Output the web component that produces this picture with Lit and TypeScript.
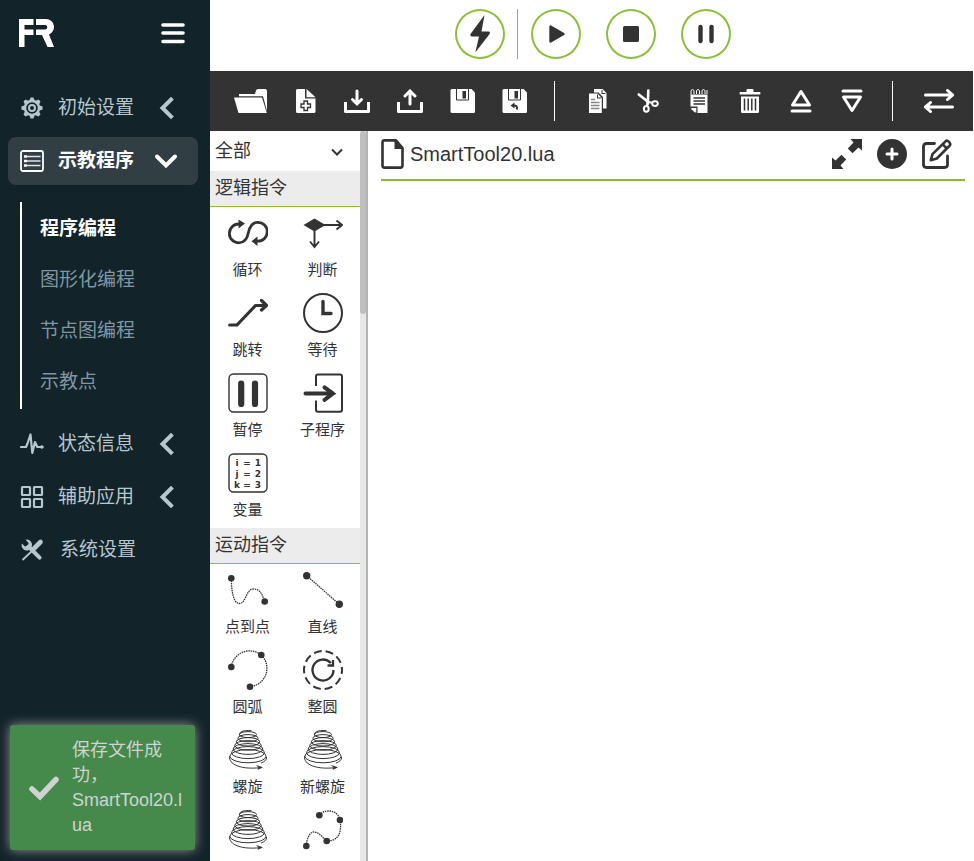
import { LitElement, html, svg, css, nothing, SVGTemplateResult } from "lit";
import { customElement, state } from "lit/decorators.js";
import { classMap } from "lit/directives/class-map.js";

type Glyph = { w: number; h: number; art: SVGTemplateResult };

const glyph = (w: number, h: number, art: SVGTemplateResult): Glyph => ({ w, h, art });

const draw = (g: Glyph) => html`<svg
  width=${g.w}
  height=${g.h}
  viewBox="0 0 ${g.w} ${g.h}"
  fill="none"
  aria-hidden="true"
>${g.art}</svg>`;

/* ---------- shared shapes ---------- */

const INK = "#333333";

const chevronLeft = glyph(24, 24, svg`<path d="M17 3.5L8.5 12l8.500 8.500" stroke="currentColor" stroke-width="4" stroke-linecap="square"/>`);
const chevronDown = glyph(24, 24, svg`<path d="M3 7.5l9 9 9-9" stroke="currentColor" stroke-width="4" stroke-linecap="round"/>`);
const chevronSmall = glyph(12, 8, svg`<path d="M1 1.5l5 5 5-5" stroke="${INK}" stroke-width="2"/>`);

const logo = glyph(35, 28, svg`
  <path fill="#fff" d="M0 0H14.5V6H5.5V10.5H14.5V16H5.5V28H0Z"/>
  <path fill="#fff" d="M17 0H27a8 8 0 0 1 3 15.4L35 28H28.5L23 16H17V10.5H26.5a2.3 2.3 0 0 0 0-4.5H17Z"/>`);

const burger = glyph(24, 22, svg`
  <path d="M2 3H22M2 11H22M2 19.5H22" stroke="#fff" stroke-width="3.6" stroke-linecap="round"/>`);

/* ---------- sidebar ---------- */

const gear = glyph(24, 24, svg`
  <circle cx="12" cy="12" r="7" stroke="currentColor" stroke-width="2.4"/>
  <circle cx="12" cy="12" r="3" stroke="currentColor" stroke-width="2"/>
  ${[0, 45, 90, 135, 180, 225, 270, 315].map(
    (a) => svg`<path transform="rotate(${a} 12 12)" fill="currentColor" d="M9.3 4.8L10.6 1.4H13.4L14.7 4.8Z"/>`
  )}`);

const listIcon = glyph(24, 24, svg`
  <rect x="1" y="2" width="22" height="20" rx="2" stroke="currentColor" stroke-width="1.8"/>
  <path d="M4 7.5h3M4 12h3M4 16.5h3" stroke="currentColor" stroke-width="2.6"/>
  <path d="M7 7.5h13.5M7 12h13.5M7 16.5h13.5" stroke="currentColor" stroke-width="1.4" opacity=".85"/>`);

const pulse = glyph(24, 24, svg`
  <path d="M1 15H6L7.5 11.5L10.5 2.5L12.3 21L15 10L17.3 15H22.5" stroke="currentColor" stroke-width="2.2" stroke-linejoin="round" stroke-linecap="round"/>
  <circle cx="21.8" cy="15" r="1.8" fill="currentColor"/>`);

const tiles = glyph(24, 24, svg`
  <g stroke="currentColor" stroke-width="2.2">
    <rect x="2" y="2" width="8" height="8" rx=".5"/><rect x="14" y="2" width="8" height="8" rx=".5"/>
    <rect x="2" y="14" width="8" height="8" rx=".5"/><rect x="14" y="14" width="8" height="8" rx=".5"/>
  </g>`);

const tools = glyph(24, 24, svg`
  <path d="M13.5 11L20.5 4" stroke="currentColor" stroke-width="4.6" stroke-linecap="round"/>
  <path d="M3 21.5L12 13" stroke="currentColor" stroke-width="1.8" stroke-linecap="round"/>
  <path d="M8.5 8.5L19.6 19.6" stroke="currentColor" stroke-width="4" stroke-linecap="round"/>
  <path fill="currentColor" d="M5.6 1.8a5.2 5.2 0 0 1 6 7.2L9 12A5.2 5.2 0 0 1 1.9 5.6L5 8.4 8 7.6 8.6 5Z"/>`);

const check = glyph(32, 26, svg`
  <path d="M4 14l8 7.500L28 4.500" stroke="currentColor" stroke-width="5.500" stroke-linecap="round"/>`);

/* ---------- run controls ---------- */

const bolt = glyph(50, 50, svg`<path fill="${INK}" d="M29.500 6L15.500 25Q14.800 27.300 17 27.400H24L20.300 43.400 34.600 25Q35.600 22.800 33.500 22.600H26.500Z"/>`);
const play = glyph(50, 50, svg`<path fill="${INK}" stroke="${INK}" stroke-width="2.400" stroke-linejoin="round" d="M19.500 17.500V32.500L32.500 25Z"/>`);
const stop = glyph(50, 50, svg`<rect x="17" y="17" width="16" height="16" rx="1.500" fill="${INK}"/>`);
const pause = glyph(50, 50, svg`<path stroke="${INK}" stroke-width="4.400" stroke-linecap="round" d="M19.500 18V32M30.500 18V32"/>`);

/* ---------- toolbar ---------- */

const floppy = svg`
  <path fill="#fff" d="M2 0H21.500L25 3.500V22.500Q25 24 23.500 24H2Q.500 24 .500 22.500V1.500Q.500 0 2 0Z"/>
  <path d="M6.500 0V11H18.500V0" stroke="${INK}" stroke-width="1"/>
  <rect x="12.500" y="2" width="3.500" height="7.500" fill="${INK}"/>`;

const folder = glyph(34, 24, svg`
  <path fill="#fff" d="M5 5H21L22 1.500Q22.500 0 24 0H31Q33 0 33 2V22L29 7.200H5Z"/>
  <path fill="#fff" d="M0 8.500H28L32.800 24H4.500Z"/>`);
const fileNew = glyph(22, 24, svg`
  <path fill="#fff" d="M2.500 0H10V9.500H20.500V22.500Q20.500 24 19 24H2.500Q1 24 1 22.500V1.500Q1 0 2.500 0Z"/>
  <path fill="#fff" d="M11.500 0L20.500 8.300H11.500Z"/>
  <path stroke="${INK}" stroke-width="1.300" d="M9 12H12.500V15H15.500V18.500H12.500V21.500H9V18.500H6V15H9Z"/>`);
const download = glyph(26, 24, svg`
  <path stroke="#fff" stroke-width="3" stroke-linejoin="round" d="M1.500 13V22.500H24.500V13"/>
  <path stroke="#fff" stroke-width="3" stroke-linecap="round" d="M13 2V14.500M8.500 10.500L13 15 17.500 10.500"/>`);
const upload = glyph(26, 24, svg`
  <path stroke="#fff" stroke-width="3" stroke-linejoin="round" d="M1.500 13V22.500H24.500V13"/>
  <path stroke="#fff" stroke-width="3" stroke-linecap="round" d="M13 15V2.500M8 7L13 2 18 7"/>`);
const save = glyph(25, 24, floppy);
const saveUndo = glyph(25, 24, svg`${floppy}
  <path stroke="${INK}" stroke-width="2" d="M11 16.500Q16 16 14.800 20.500"/>
  <path fill="${INK}" d="M12.500 13.500V19.500L8.500 16.500Z"/>`);
const copy = glyph(22, 24, svg`
  <path fill="#fff" d="M8 0H16.500L20.500 4V19.500H17V8L12.500 3.500H8Z"/>
  <path fill="${INK}" d="M15.500 1H16.500V4H19.500V5H15.500Z"/>
  <path fill="#fff" d="M3 4.500H11.500L15.800 9V24H3Z"/>
  <path fill="${INK}" d="M11 5.500H12V8.500H15V9.500H11Z"/>
  <path stroke="#888" stroke-width="1.300" d="M5 10.500H9M5 13.500H13.500M5 16.500H13.500M5 19.500H13.500"/>`);
const cut = glyph(22, 24, svg`
  <path stroke="#fff" stroke-width="2.600" stroke-linecap="round" d="M1.800 5.500L11 12.800M11.300 1.500L10.800 15"/>
  <path stroke="#fff" stroke-width="2" d="M10.500 13L15.500 13.800M10.500 13L9.800 17.500"/>
  <ellipse cx="9.300" cy="19.800" rx="2.400" ry="2.900" stroke="#fff" stroke-width="2"/>
  <ellipse cx="18" cy="14.600" rx="2.800" ry="2.400" stroke="#fff" stroke-width="2"/>`);
const notes = glyph(22, 24, svg`
  <path fill="#fff" d="M2.500 5.500H19.500V24H9L2.500 18.500Z"/>
  <path stroke="#fff" stroke-width="1" d="M3 5.500V1.500Q4.500-.500 6 1.500V5M8.500 5V1.500Q10-.500 11.500 1.500V5M14 5V1.500Q15.500-.500 17 1.500V5M19 5V1"/>
  <path stroke="${INK}" stroke-width="1.300" d="M5.500 9H17M5.500 12H17M5.500 15H17"/>
  <path fill="${INK}" d="M2 17.500H9.500V24.500H8.300V19H2Z"/>
  <path fill="#fff" d="M2.500 19.500H7.500V24Z"/>`);
const trash = glyph(22, 24, svg`
  <path fill="#fff" d="M1.500 3H7.500V1Q7.500 0 8.500 0H13.500Q14.500 0 14.500 1V3H20.500Q21.500 3 21.500 4.200T20.500 5.500H1.500Q.500 5.500 .500 4.200T1.500 3Z"/>
  <path fill="#fff" d="M2 7.500H20V22.500Q20 24 18.500 24H3.500Q2 24 2 22.500Z"/>
  <path stroke="${INK}" stroke-width="1.500" d="M5.500 9.500V21.500M9.200 9.500V21.500M12.800 9.500V21.500M16.500 9.500V21.500"/>`);
const moveUp = glyph(22, 24, svg`
  <path stroke="#fff" stroke-width="3" stroke-linejoin="round" d="M11 2.500L19.500 16H2.500Z"/>
  <path stroke="#fff" stroke-width="3" stroke-linecap="round" d="M2 22H20"/>`);
const moveDown = glyph(22, 24, svg`
  <path stroke="#fff" stroke-width="3" stroke-linejoin="round" d="M11 21.500L19.500 8H2.500Z"/>
  <path stroke="#fff" stroke-width="3" stroke-linecap="round" d="M2 2H20"/>`);
const swap = glyph(30, 24, svg`
  <path stroke="#fff" stroke-width="3" stroke-linecap="round" d="M1.500 6H28M23.500 1.500L28.500 6 23.500 10.500M28.500 18H2M6.500 13.500L1.500 18 6.500 22.500"/>`);

/* ---------- editor header ---------- */

const fileIcon = glyph(23, 30, svg`
  <path stroke="${INK}" stroke-width="2.600" stroke-linejoin="round" d="M3.500 1.400H15L21.500 9V26.500Q21.500 28.600 19.500 28.600H3.500Q1.500 28.600 1.500 26.500V3.500Q1.500 1.400 3.500 1.400Z"/>
  <path fill="${INK}" d="M13.500 1H15.500L22 8.500V10H13.500Z"/>`);
const expand = glyph(30, 30, svg`
  <path fill="${INK}" d="M18.500 0H30V11.500L26.500 8.500 20.500 14.200 15.800 9.500 21.500 3.500Z"/>
  <path fill="${INK}" d="M11.500 30H0V18.500L3.500 21.500 9.500 15.800 14.200 20.500 8.500 26.500Z"/>`);
const addCircle = glyph(30, 30, svg`
  <circle cx="15" cy="15" r="15" fill="${INK}"/>
  <path stroke="#fff" stroke-width="3" stroke-linecap="round" d="M15 10V20M10 15H20"/>`);
const edit = glyph(30, 30, svg`
  <path stroke="${INK}" stroke-width="2.800" stroke-linecap="round" d="M12.500 4.500H4.500Q1.500 4.500 1.500 7.500V25.500Q1.500 28.500 4.500 28.500H22.500Q25.500 28.500 25.500 25.500V17"/>
  <path stroke="${INK}" stroke-width="2.600" stroke-linejoin="round" d="M23.500 2.300Q25 .800 27 2.800T27.800 6.500L14.800 19.500 8.800 21.200 10.500 15.200ZM20.500 5.200L24.800 9.500"/>`);

/* ---------- instruction palette ---------- */

const loop = glyph(40, 40, svg`
  <path stroke="${INK}" stroke-width="2.800" d="M12.500 11H10.800A9.400 9.400 0 0 0 10.800 29.800C17 29.800 19.300 25 20.300 20S24 9.300 29.800 9.300A9.400 9.400 0 0 1 29.800 28.200H28"/>
  <path fill="${INK}" d="M10.500 6.500L17 10.500 10.500 15.500ZM29.500 23.500L23.500 28.200 29.500 33Z"/>`);
const judge = glyph(40, 40, svg`
  <path fill="${INK}" d="M.500 12L11.500 5.500 22.500 12 11.500 18.500Z"/>
  <path stroke="${INK}" stroke-width="1.900" d="M20 12H38.500M33.500 7.500L39 12 33.500 16.500M11.500 18V33.500M7 28.500L11.500 34 16 28.500"/>`);
const jump = glyph(40, 40, svg`
  <path stroke="${INK}" stroke-width="3.200" stroke-linecap="round" stroke-linejoin="round" d="M1.700 32H9L27.500 12.500H38M33.500 7.500L38.500 12.500 33.500 17"/>`);
const wait = glyph(40, 40, svg`
  <circle cx="20" cy="20" r="19" stroke="${INK}" stroke-width="2"/>
  <path stroke="${INK}" stroke-width="3.400" stroke-linecap="round" d="M20 8.500V20.500H28"/>`);
const hold = glyph(40, 40, svg`
  <rect x="1" y="1" width="38" height="38" rx="4.500" stroke="${INK}" stroke-width="1.400"/>
  <path stroke="${INK}" stroke-width="6.200" stroke-linecap="round" d="M13.200 10.500V31M27 10.500V31"/>`);
const subroutine = glyph(40, 40, svg`
  <path stroke="${INK}" stroke-width="2" d="M13 13V3.500Q13 1.500 15 1.500H37Q39 1.500 39 3.500V36.500Q39 38.800 37 38.800H15Q13 38.800 13 36.500V27.500"/>
  <path stroke="${INK}" stroke-width="4" stroke-linecap="round" d="M2.500 20.500H30M21.500 14.300L30 20.500 21.500 26.800"/>`);
const variable = glyph(40, 40, svg`
  <rect x="1" y="1" width="38" height="38" rx="4.500" stroke="${INK}" stroke-width="1.400"/>
  <g fill="${INK}" class="tiny">
    ${[["i", "1"], ["j", "2"], ["k", "3"]].map(
      ([k, v], i) => svg`
        <text x="9" y="${13 + i * 11}" text-anchor="middle">${k}</text>
        <text x="19" y="${13 + i * 11}" text-anchor="middle">=</text>
        <text x="30" y="${13 + i * 11}" text-anchor="middle">${v}</text>`
    )}
  </g>`);

const dotted = (d: string) => svg`<path d="${d}" stroke="${INK}" stroke-width="1.300" stroke-dasharray="1.500 .800"/>`;
const dots = (r: number, pts: number[][]) => pts.map(([x, y]) => svg`<circle cx="${x}" cy="${y}" r="${r}" fill="${INK}"/>`);

const ptp = glyph(40, 40, svg`
  ${dotted("M3.300 8.300C3.500 20 5 33.500 11.500 33.500S18 19 25.500 19S34.500 26 36.700 31.500")}
  ${dots(3.3, [[3.3, 8.3], [36.7, 31.5]])}`);
const lin = glyph(40, 40, svg`
  ${dotted("M3.700 5.700L36.300 34.300")}${dots(3.7, [[3.7, 5.7], [36.3, 34.3]])}`);
const arc = glyph(40, 40, svg`
  ${dotted("M3.300 17A18.500 18.500 0 0 1 33.300 5A18.500 18.500 0 0 1 22 36.700")}
  ${dots(3.3, [[3.3, 17], [33.3, 5], [22, 36.7]])}`);
const circle = glyph(40, 40, svg`
  <circle cx="20" cy="20" r="19" stroke="${INK}" stroke-width="2" stroke-dasharray="7.900 4.040" stroke-dashoffset="3.900"/>
  <path stroke="${INK}" stroke-width="2.300" d="M27.800 13A10.500 10.500 0 1 0 30.500 20"/>
  <path stroke="${INK}" stroke-width="2.300" d="M30 10V15.500H24.500"/>`);
const spiral = glyph(40, 40, svg`
  <g stroke="${INK}" stroke-width="1">
    <path d="M23.500 .700C14 0 11 2 11.500 5.500"/>
    ${[0, 1, 2, 3, 4, 5, 6].map(
      (i) => svg`<ellipse cx="20" cy="${4.6 + i * 3.6}" rx="${8.5 + i * 1.6}" ry="${3 + i * 0.6}"/>`
    )}
    <path d="M1.500 26C.500 35 14 40 34 37.500"/>
    <path d="M38.500 27C39 30 36 32 33 33"/>
  </g>
  <path fill="${INK}" d="M28 35L35 37.200 29.500 40 30.500 37.600Z"/>`);
const spline = glyph(40, 40, svg`
  ${dotted("M16.300 5.300C19 2 22 1 26 1C32 1 36 5 37 10C39 22 36 31 23.700 31C20 28 16 22 11 22S3.500 30 3.300 36")}
  ${dots(3.3, [[16.3, 5.3], [37, 10], [23.7, 31], [3.3, 36]])}`);

/* ---------- data ---------- */

type MenuEntry = { label: string; icon: Glyph; children?: string[] };

const MENU: MenuEntry[] = [
  { label: "初始设置", icon: gear, children: [] },
  { label: "示教程序", icon: listIcon, children: ["程序编程", "图形化编程", "节点图编程", "示教点"] },
  { label: "状态信息", icon: pulse, children: [] },
  { label: "辅助应用", icon: tiles, children: [] },
  { label: "系统设置", icon: tools },
];

const FILE_TOOLS: [string, Glyph][] = [
  ["打开", folder], ["新建", fileNew], ["导入", download],
  ["导出", upload], ["保存", save], ["另存为", saveUndo],
];

const EDIT_TOOLS: [string, Glyph][] = [
  ["复制", copy], ["剪切", cut], ["粘贴", notes],
  ["删除", trash], ["上移", moveUp], ["下移", moveDown],
];

const SECTIONS: { title: string; items: [string, Glyph][] }[] = [
  {
    title: "逻辑指令",
    items: [
      ["循环", loop], ["判断", judge], ["跳转", jump], ["等待", wait],
      ["暂停", hold], ["子程序", subroutine], ["变量", variable],
    ],
  },
  {
    title: "运动指令",
    items: [
      ["点到点", ptp], ["直线", lin], ["圆弧", arc], ["整圆", circle],
      ["螺旋", spiral], ["新螺旋", spiral], ["", spiral], ["", spline],
    ],
  },
];

@customElement("app-root")
export class AppRoot extends LitElement {
  @state() private open = "示教程序";
  @state() private page = "程序编程";

  static styles = css`
    :host {
      display: grid;
      grid-template-columns: 210px minmax(0, 1fr);
      height: 100vh;
      overflow: hidden;
      background: #fff;
      color: #333;
      font-family: "Liberation Sans", "Noto Sans CJK SC", sans-serif;
    }
    * { box-sizing: border-box; }
    svg { display: block; flex: none; }
    button {
      margin: 0;
      padding: 0;
      border: 0;
      background: none;
      color: inherit;
      font: inherit;
      cursor: pointer;
    }
    a { color: inherit; text-decoration: none; }

    .sidebar {
      position: relative;
      overflow: hidden;
      background: #12232a;
      color: #b8c7ce;
      font-size: 19px;
      line-height: 24px;
    }
    .brand {
      display: flex;
      align-items: center;
      justify-content: space-between;
      height: 66px;
      padding: 0 25px 0 19px;
    }
    .menu {
      display: flex;
      flex-direction: column;
      gap: 5px;
      padding: 18px 12px 0 8px;
    }
    .entry {
      display: flex;
      align-items: center;
      gap: 14px;
      width: 100%;
      height: 48px;
      padding: 0 20px 0 12px;
      border-radius: 8px;
      text-align: left;
    }
    .entry.leaf { gap: 16px; }
    .entry.open {
      background: #313e44;
      color: #fff;
      font-weight: 700;
    }
    .entry .name { flex: 1; }
    .sub {
      display: flex;
      flex-direction: column;
      gap: 27px;
      margin: 12px 0 6px 12px;
      padding: 15px 0 15px 18px;
      border-left: 2px solid #fff;
      color: #8097a2;
    }
    .sub .current {
      color: #fff;
      font-weight: 700;
    }

    .toast {
      position: absolute;
      left: 10px;
      right: 15px;
      bottom: 11px;
      display: flex;
      align-items: center;
      gap: 12px;
      padding: 13px 9px 12px 18px;
      border-radius: 3px;
      background: #468a4b;
      box-shadow: 0 0 12px #999;
      color: #d0d3d3;
      font-size: 18px;
      line-height: 25px;
    }
    .toast p {
      flex: 1;
      min-width: 0;
      margin: 0;
      overflow-wrap: break-word;
    }

    .main {
      display: grid;
      grid-template-rows: auto auto minmax(0, 1fr);
      min-width: 0;
      min-height: 0;
    }
    .run {
      display: flex;
      justify-content: center;
      gap: 25px;
      padding: 9px 0 12px 2px;
    }
    .power {
      display: flex;
      gap: 12px;
      margin-right: -12px;
    }
    .power::after {
      content: "";
      width: 1px;
      background: #8bbf3a;
    }
    .round {
      display: grid;
      place-items: center;
      width: 50px;
      height: 50px;
      border-radius: 50%;
      box-shadow: inset 0 0 0 2px #8bbf3a;
    }
    .toolbar {
      display: flex;
      align-items: center;
      height: 60px;
      margin-right: 1px;
      padding: 0 19px 0 24px;
      background: #333;
    }
    .group { display: flex; gap: 27px; }
    .group.edit {
      gap: 29px;
      padding-right: 2px;
    }
    .rule {
      width: 1px;
      height: 40px;
      margin: 0 31px 0 27px;
      background: #fff;
    }

    .work {
      display: grid;
      grid-template-columns: 150px 8px minmax(0, 1fr);
      min-height: 0;
    }
    .palette {
      min-height: 0;
      overflow: hidden;
    }
    .filter {
      position: relative;
      height: 40px;
    }
    .filter select {
      width: 100%;
      height: 40px;
      padding: 0 5px;
      border: 0;
      appearance: none;
      background: #fff;
      color: #333;
      font: inherit;
      font-size: 18px;
    }
    .filter svg {
      position: absolute;
      right: 17px;
      top: 17px;
      pointer-events: none;
    }
    .section h2 {
      height: 36px;
      margin: 0;
      padding: 0 5px;
      border-bottom: 1px solid #8bbf3a;
      background: #ececec;
      font-size: 18px;
      font-weight: 400;
      line-height: 35px;
    }
    .cells {
      display: grid;
      grid-template-columns: 1fr 1fr;
      padding-bottom: 1px;
    }
    .cell {
      display: flex;
      flex-direction: column;
      align-items: center;
      gap: 7px;
      height: 80px;
      padding-top: 6px;
      font-size: 15px;
      line-height: 20px;
      white-space: nowrap;
    }
    .tiny {
      font: 700 9px "DejaVu Sans", sans-serif;
    }
    .track {
      border-right: 2px solid #b4b4b4;
      background: #e8e8e8;
    }
    .thumb {
      height: 25%;
      border-radius: 3px;
      background: #bfbfbf;
    }

    .editor {
      min-width: 0;
      padding: 0 9px 0 13px;
    }
    .tab {
      display: flex;
      align-items: center;
      height: 50px;
      padding: 0 13px 2px 0;
      border-bottom: 2px solid #8bbb35;
    }
    .tab h1 {
      flex: 1;
      margin: 0 0 0 6px;
      font-size: 20px;
      font-weight: 400;
      line-height: 24px;
    }
    .actions { display: flex; gap: 15px; }
  `;

  private entry(m: MenuEntry) {
    if (!m.children) {
      return html`<a class="entry leaf" href="#">${draw(m.icon)}<span class="name">${m.label}</span></a>`;
    }
    const isOpen = m.label === this.open;
    return html`
      <button
        class=${classMap({ entry: true, open: isOpen })}
        aria-expanded=${isOpen}
        @click=${() => (this.open = isOpen ? "" : m.label)}
      >
        ${draw(m.icon)}<span class="name">${m.label}</span>${draw(isOpen ? chevronDown : chevronLeft)}
      </button>
      ${isOpen && m.children.length
        ? html`<div class="sub">
            ${m.children.map(
              (c) => html`<a
                href="#"
                class=${classMap({ current: c === this.page })}
                @click=${() => (this.page = c)}
              >${c}</a>`
            )}
          </div>`
        : nothing}
    `;
  }

  private tool([label, icon]: [string, Glyph], cls = "") {
    return html`<button class=${cls} aria-label=${label}>${draw(icon)}</button>`;
  }

  render() {
    return html`
      <aside class="sidebar" lang="zh-CN">
        <div class="brand">${draw(logo)}${this.tool(["菜单", burger])}</div>
        <nav class="menu">${MENU.map((m) => this.entry(m))}</nav>
        <div class="toast" role="status">
          ${draw(check)}
          <p>保存文件成功，SmartTool20.lua</p>
        </div>
      </aside>
      <main class="main" lang="zh-CN">
        <header class="run">
          <div class="power">${this.tool(["使能", bolt], "round")}</div>
          ${this.tool(["运行", play], "round")}
          ${this.tool(["停止", stop], "round")}
          ${this.tool(["暂停", pause], "round")}
        </header>
        <div class="toolbar">
          <div class="group">${FILE_TOOLS.map((t) => this.tool(t))}</div>
          <span class="rule"></span>
          <div class="group edit">${EDIT_TOOLS.map((t) => this.tool(t))}</div>
          <span class="rule"></span>
          ${this.tool(["切换", swap])}
        </div>
        <div class="work">
          <div class="palette">
            <div class="filter">
              <select aria-label="指令分类">
                <option>全部</option>
                ${SECTIONS.map((s) => html`<option>${s.title}</option>`)}
              </select>
              ${draw(chevronSmall)}
            </div>
            ${SECTIONS.map(
              (s) => html`<section class="section">
                <h2>${s.title}</h2>
                <div class="cells">
                  ${s.items.map(
                    ([label, icon]) => html`<button class="cell">
                      ${draw(icon)}${label ? html`<span>${label}</span>` : nothing}
                    </button>`
                  )}
                </div>
              </section>`
            )}
          </div>
          <div class="track"><div class="thumb"></div></div>
          <section class="editor">
            <div class="tab">
              ${draw(fileIcon)}
              <h1>SmartTool20.lua</h1>
              <div class="actions">
                ${this.tool(["全屏", expand])}${this.tool(["添加", addCircle])}${this.tool(["编辑", edit])}
              </div>
            </div>
          </section>
        </div>
      </main>
    `;
  }
}
